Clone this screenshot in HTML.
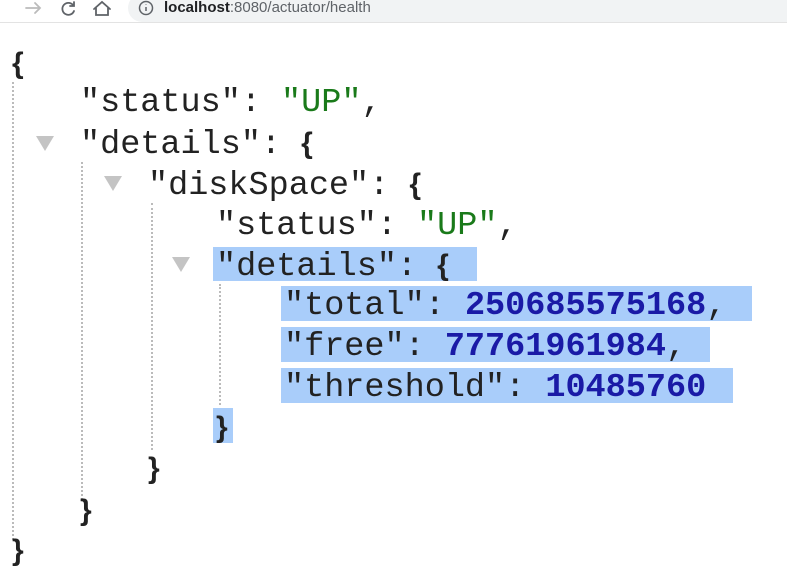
<!DOCTYPE html>
<html><head><style>
body{margin:0;width:787px;height:568px;background:#fff;overflow:hidden;position:relative;font-family:"Liberation Mono",monospace;}
.bar{position:absolute;left:0;top:0;width:787px;height:22px;background:#fff;border-bottom:1px solid #e3e3e3;}
.pill{position:absolute;left:128px;top:-6px;width:680px;height:28px;border-radius:14px;background:#f1f3f4;}
.url{position:absolute;left:164px;top:-1px;font:15px "Liberation Sans",sans-serif;color:#202124;}
.url span{color:#5f6368}
.l{position:absolute;font-size:33.5px;line-height:36px;color:#222;white-space:pre;}
.g{color:#1a7a1a}
.n{color:#1a1aa6;font-weight:bold}
.b{font-family:"Liberation Sans",sans-serif;font-weight:bold;font-size:30px}
.hl{position:absolute;background:#a9cdfa;}
.dot{position:absolute;width:0;border-left:2px dotted #bbb;}
.tri{position:absolute;width:0;height:0;border-left:9px solid transparent;border-right:9px solid transparent;border-top:15px solid #c4c4c4;}
</style></head><body>
<div class="bar"><div class="pill"></div>
<svg style="position:absolute;left:20px;top:0" width="100" height="18" fill="none" stroke-width="1.8" stroke-linecap="round">
<path d="M6 8h14M15 3l5 5-5 5" stroke="#bbb"/>
<path d="M53 5a6 6 0 1 0 1 6M54 2v4h-4" stroke="#5f6368"/>
<path d="M74 9l8-7 8 7M76 8v7h12V8" stroke="#5f6368"/>
</svg>
<svg style="position:absolute;left:138px;top:0" width="18" height="16" fill="none" stroke="#5f6368" stroke-width="1.5"><circle cx="8" cy="8" r="6.5"/><path d="M8 7v4M8 4.5v.5"/></svg>
<div class="url"><b>localhost</b><span>:8080/actuator/health</span></div></div>

<div class="hl" style="left:213px;top:247px;width:264px;height:34px"></div>
<div class="hl" style="left:281px;top:286px;width:471px;height:35px"></div>
<div class="hl" style="left:281px;top:327px;width:429px;height:35px"></div>
<div class="hl" style="left:281px;top:368px;width:452px;height:35px"></div>
<div class="hl" style="left:213px;top:408px;width:20px;height:35px"></div>

<div class="dot" style="left:12px;top:82px;height:458px"></div>
<div class="dot" style="left:81px;top:162px;height:338px"></div>
<div class="dot" style="left:151px;top:203px;height:247px"></div>
<div class="dot" style="left:219px;top:284px;height:121px"></div>

<div class="tri" style="left:36px;top:136px"></div>
<div class="tri" style="left:104px;top:176px"></div>
<div class="tri" style="left:172px;top:257px"></div>

<div class="l b" style="left:12px;top:46px">{</div>
<div class="l" style="left:80px;top:85px">"status": <span class="g">"UP"</span>,</div>
<div class="l" style="left:80px;top:126px">"details": <span class="b">{</span></div>
<div class="l" style="left:148px;top:167px">"diskSpace": <span class="b">{</span></div>
<div class="l" style="left:216px;top:208px">"status": <span class="g">"UP"</span>,</div>
<div class="l" style="left:216px;top:248px">"details": <span class="b">{</span></div>
<div class="l" style="left:284px;top:288px">"total": <span class="n">250685575168</span>,</div>
<div class="l" style="left:284px;top:329px">"free": <span class="n">77761961984</span>,</div>
<div class="l" style="left:284px;top:370px">"threshold": <span class="n">10485760</span></div>
<div class="l b" style="left:216px;top:410px">}</div>
<div class="l b" style="left:148px;top:451px">}</div>
<div class="l b" style="left:80px;top:493px">}</div>
<div class="l b" style="left:12px;top:533px">}</div>
</body></html>
